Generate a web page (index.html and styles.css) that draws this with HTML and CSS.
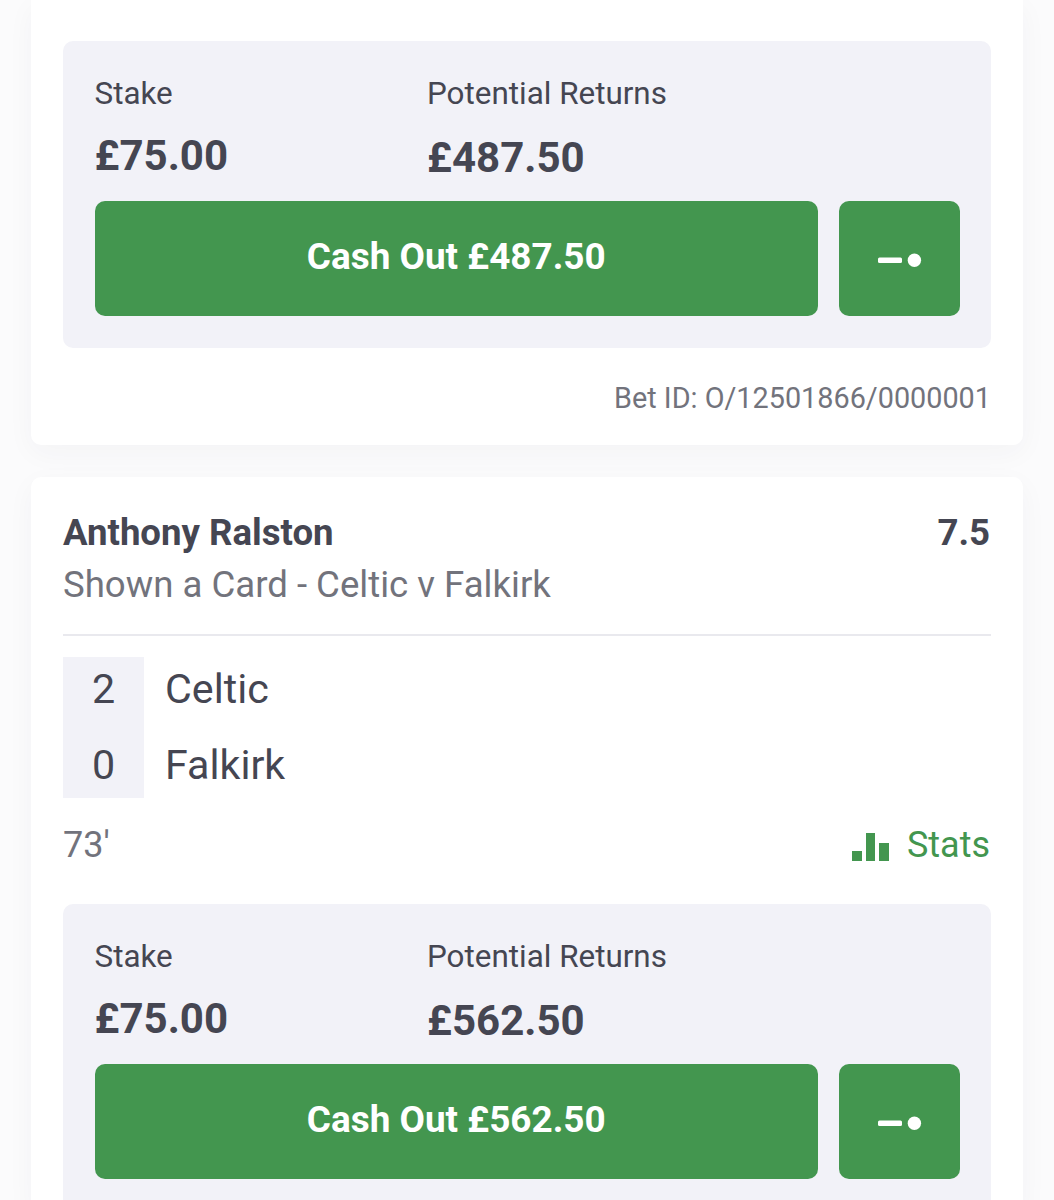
FILE: index.html
```html
<!DOCTYPE html>
<html lang="en">
<head>
    <meta charset="UTF-8">
    <meta name="viewport" content="width=device-width, initial-scale=1.0">
    <title>My Bets</title>
    <link rel="stylesheet" href="styles.css">
</head>
<body>
    <!-- First bet (top is scrolled off) -->
    <div class="bet-card bet-card-first">
        <div class="cashout-panel">
            <div class="figures">
                <div class="figure">
                    <span class="figure-label">Stake</span>
                    <span class="figure-value">£75.00</span>
                </div>
                <div class="figure figure-returns">
                    <span class="figure-label">Potential Returns</span>
                    <span class="figure-value">£487.50</span>
                </div>
            </div>
            <div class="actions">
                <button class="cashout-btn">Cash Out £487.50</button>
                <button class="slider-btn" aria-label="Partial cash out">
                    <svg width="44" height="16" viewBox="0 0 44 16"><rect x="0" y="5.5" width="24" height="5.4" rx="1.5" fill="#fff"/><circle cx="36.4" cy="8.2" r="6.7" fill="#fff"/></svg>
                </button>
            </div>
        </div>
        <div class="bet-id">Bet ID: O/12501866/0000001</div>
    </div>

    <!-- Second bet -->
    <div class="bet-card">
        <div class="bet-head">
            <div class="selection-row">
                <span class="selection">Anthony Ralston</span>
                <span class="odds">7.5</span>
            </div>
            <div class="market">Shown a Card - Celtic v Falkirk</div>
        </div>
        <div class="scoreboard">
            <div class="score-row score-row-home"><span class="score">2</span><span class="team">Celtic</span></div>
            <div class="score-row score-row-away"><span class="score">0</span><span class="team">Falkirk</span></div>
        </div>
        <div class="match-row">
            <span class="match-time">73'</span>
            <span class="stats">
                <svg class="stats-icon" width="37" height="28" viewBox="0 0 37 28"><rect x="0" y="18" width="10" height="10" fill="#43964f"/><rect x="14" y="0" width="9" height="28" fill="#43964f"/><rect x="27" y="10" width="10" height="18" fill="#43964f"/></svg>
                Stats
            </span>
        </div>
        <div class="cashout-panel">
            <div class="figures">
                <div class="figure">
                    <span class="figure-label">Stake</span>
                    <span class="figure-value">£75.00</span>
                </div>
                <div class="figure figure-returns">
                    <span class="figure-label">Potential Returns</span>
                    <span class="figure-value">£562.50</span>
                </div>
            </div>
            <div class="actions">
                <button class="cashout-btn">Cash Out £562.50</button>
                <button class="slider-btn" aria-label="Partial cash out">
                    <svg width="44" height="16" viewBox="0 0 44 16"><rect x="0" y="5.5" width="24" height="5.4" rx="1.5" fill="#fff"/><circle cx="36.4" cy="8.2" r="6.7" fill="#fff"/></svg>
                </button>
            </div>
        </div>
    </div>
</body>
</html>
```

FILE: styles.css
```css
/* Base Styles */
* {
    margin: 0;
    padding: 0;
    box-sizing: border-box;
    font-family: Roboto, "Liberation Sans", sans-serif;
}
html, body {
    height: 1200px;
    overflow: hidden;
}
body {
    background-color: #fbfbfc;
    padding: 0 31px;
    color: #454652;
}
/* Cards */
.bet-card {
    background-color: #fff;
    border-radius: 10px;
    padding: 33px 32px 0;
    box-shadow: 0 8px 28px rgba(40, 40, 70, 0.04);
    margin-bottom: 32px;
}
.bet-card-first {
    height: 445px;
    padding-top: 41px;
    border-radius: 0 0 10px 10px;
}
/* Selection */
.bet-head {
    padding-bottom: 20px;
    border-bottom: 2px solid #e9e9ee;
}
.selection-row {
    display: flex;
    justify-content: space-between;
    line-height: 46px;
    font-size: 36.6px;
    font-weight: 700;
}
.odds {
    margin-right: 1px;
}
.market {
    font-size: 36.6px;
    line-height: 58px;
    color: #72737c;
}
/* Scoreboard */
.scoreboard {
    margin-top: 21px;
}
.score-row {
    display: flex;
    font-size: 41.2px;
}
.score-row-home {
    height: 64px;
    line-height: 64px;
}
.score-row-away {
    height: 77px;
    line-height: 66px;
}
.score {
    width: 81px;
    text-align: center;
    background-color: #f2f2f8;
}
.team {
    margin-left: 21px;
}
.score-row-away .score, .score-row-away .team {
    padding-top: 11px;
}
.match-row {
    display: flex;
    justify-content: space-between;
    align-items: center;
    margin-top: 23px;
    height: 48px;
    font-size: 36px;
    color: #72737c;
}
.stats {
    display: flex;
    align-items: center;
    gap: 18px;
    margin-right: 1px;
    color: #43964f;
}
.stats-icon {
    margin-top: 4px;
}
/* Cash out panel */
.cashout-panel {
    background-color: #f2f2f8;
    border-radius: 10px;
    padding: 33px 31px 32px 31.5px;
    margin-top: 35px;
}
.bet-card-first .cashout-panel {
    margin-top: 0;
}
.figures {
    display: flex;
    height: 127px;
}
.figure {
    display: flex;
    flex-direction: column;
    width: 332.5px;
}
.figure-label {
    font-size: 31.4px;
    line-height: 40px;
    color: #454652;
}
.figure-value {
    font-size: 42px;
    font-weight: 700;
    line-height: 50px;
    margin-top: 17px;
}
.figure-returns .figure-value {
    margin-top: 19px;
}
.actions {
    display: flex;
    gap: 21px;
}
.cashout-btn, .slider-btn {
    height: 115px;
    border: none;
    border-radius: 10px;
    background-color: #43964f;
    color: #fff;
}
.cashout-btn {
    flex: 1;
    font-size: 36.9px;
    font-weight: 700;
    padding-bottom: 4px;
}
.slider-btn {
    width: 121px;
    display: flex;
    align-items: center;
    justify-content: center;
    padding-top: 2px;
}
/* Bet ID */
.bet-id {
    margin-top: 32px;
    text-align: right;
    font-size: 28.8px;
    line-height: 36px;
    color: #72737c;
}
```
